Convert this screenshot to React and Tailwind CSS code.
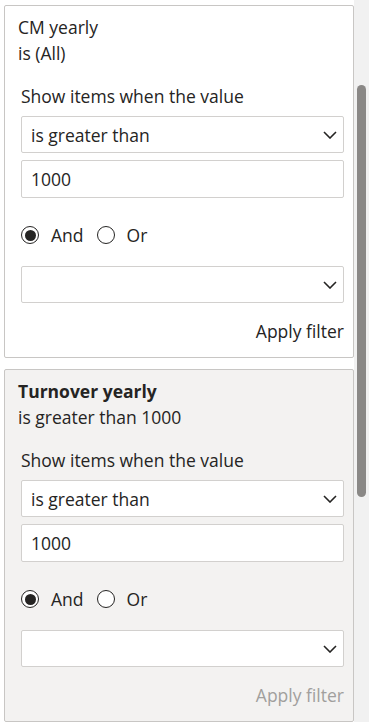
const font = { fontFamily: '"Open Sans", "Noto Sans", sans-serif' };

function Select({ value }) {
  return (
    <div className="h-[37px] bg-white border border-[#d2d0ce] rounded-[2px] flex items-center justify-between pl-[9px] pr-[6px]">
      <span>{value}</span>
      <svg viewBox="0 0 14 8" className="w-[14px] h-[8px]" fill="none">
        <path d="M1 1L7 7L13 1" stroke="#252423" strokeWidth="1.6" />
      </svg>
    </div>
  );
}

function Radio({ checked, label }) {
  return (
    <div className="flex items-center gap-[12px]">
      <span className="w-[18px] h-[18px] rounded-full border border-[#252423] bg-white flex items-center justify-center">
        {checked && <span className="w-[11px] h-[11px] rounded-full bg-[#252423]" />}
      </span>
      <span>{label}</span>
    </div>
  );
}

function FilterCard({ title, subtitle, bold, shaded, disabled }) {
  return (
    <div
      className={`border border-[#c8c6c4] rounded-[2px] pt-[8px] pb-[13px] pl-[13px] pr-[9px] ${
        shaded ? 'bg-[#f3f2f1]' : 'bg-white'
      }`}
    >
      <div className="leading-[26px]">
        <div className={bold ? 'font-bold' : ''}>{title}</div>
        <div>{subtitle}</div>
      </div>
      <div className="pl-[3px] leading-[26px]">
        <div className="mt-[17px]">Show items when the value</div>
        <div className="mt-[7px]">
          <Select value="is greater than" />
        </div>
        <div className="mt-[7px] h-[38px] bg-white border border-[#d2d0ce] rounded-[2px] flex items-center pl-[9px]">
          1000
        </div>
        <div className="mt-[25px] h-[24px] flex items-center gap-[13px]">
          <Radio checked label="And" />
          <Radio label="Or" />
        </div>
        <div className="mt-[19px]">
          <Select value="" />
        </div>
        <div className={`mt-[15px] text-right ${disabled ? 'text-[#a19f9d]' : ''}`}>Apply filter</div>
      </div>
    </div>
  );
}

export default function App() {
  return (
    <div className="w-[369px] h-[722px] bg-white flex text-[17.5px] text-[#252423] overflow-hidden" style={font}>
      <div className="w-[354px] pl-[4px] pt-[5px] flex flex-col gap-[11px]">
        <FilterCard title="CM yearly" subtitle="is (All)" />
        <FilterCard title="Turnover yearly" subtitle="is greater than 1000" bold shaded disabled />
      </div>
      <div className="flex-1 bg-[#f1f1f1] pl-[3px] pt-[85px]">
        <div className="w-[9px] h-[412px] rounded-full bg-[#8a8886]" />
      </div>
    </div>
  );
}
